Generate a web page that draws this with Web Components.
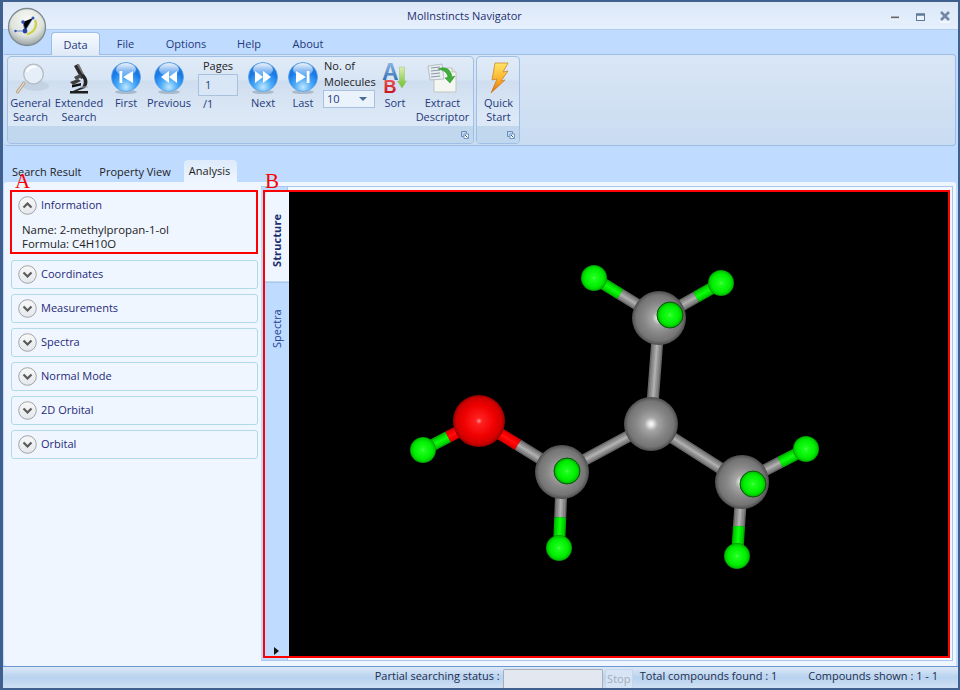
<!DOCTYPE html>
<html><head><meta charset="utf-8"><title>MolInstincts Navigator</title>
<style>
html,body{margin:0;padding:0;width:960px;height:690px;overflow:hidden;background:#bfdbff}
body{font:11px/14px "Open Sans","Noto Sans",sans-serif;color:#1f2a5e}
</style></head><body>
<app-window>
  <title-bar slot="title">MolInstincts Navigator</title-bar>
  <ribbon-tabs slot="tabs"><ribbon-tab active>Data</ribbon-tab><ribbon-tab w="51">File</ribbon-tab><ribbon-tab w="70">Options</ribbon-tab><ribbon-tab w="56">Help</ribbon-tab><ribbon-tab w="62">About</ribbon-tab></ribbon-tabs>
  <ribbon-bar slot="ribbon">
    <ribbon-group launcher style="width:467px">
      <ribbon-button w="43"><svg slot="icon" width="36" height="36" viewBox="0 0 36 36"><ellipse cx="23" cy="26" rx="13" ry="5" fill="#b4c3d4" opacity=".45"/><path d="M11 23 4.500 32" stroke="#b9a98c" stroke-width="3.200" stroke-linecap="round"/><path d="M11 23 4.500 32" stroke="#e8e0d0" stroke-width="1.200" stroke-linecap="round"/><circle cx="20.500" cy="14" r="9.800" fill="#e6eff8" stroke="#b4bac2" stroke-width="1.300"/><path d="M14 12a7 7 0 0 1 9-5" stroke="#fff" stroke-width="2" fill="none"/></svg>General<br>Search</ribbon-button>
      <ribbon-button w="54"><svg slot="icon" width="36" height="36" viewBox="0 0 36 36"><path d="M9 31h18v2.500H9z" fill="#1c1c1c"/><path d="M13 6l4-2 7 13-4 2z" fill="#2b2b2b"/><path d="M16 5l2-1 6 12-1 1z" fill="#777"/><path d="M22 14c5 3 6 10 2 14l-8 3h-4l9-4c3-4 2-8-1-11z" fill="#262626"/><path d="M9 22l8-3 3 2-8 4z" fill="#3c3c3c"/><path d="M11 25l9-2v2.500l-9 2z" fill="#111"/><path d="M13 17l6-3 2 3-6 3z" fill="#4a4a4a"/><path d="M19 27h8" stroke="#aab" stroke-width="1"/></svg>Extended<br>Search</ribbon-button>
      <ribbon-button w="40"><nav-button slot="icon" kind="first"></nav-button>First</ribbon-button>
      <ribbon-button w="46"><nav-button slot="icon" kind="prev"></nav-button>Previous</ribbon-button>
      <page-box></page-box>
      <ribbon-button w="50"><nav-button slot="icon" kind="next"></nav-button>Next</ribbon-button>
      <ribbon-button w="30"><nav-button slot="icon" kind="last"></nav-button>Last</ribbon-button>
      <molecule-count></molecule-count>
      <ribbon-button w="40"><svg slot="icon" width="36" height="36" viewBox="0 0 36 36"><defs><linearGradient id="ga" x1="0" y1="0" x2="0" y2="1"><stop offset="0" stop-color="#9cc4ec"/><stop offset="1" stop-color="#1d5ea8"/></linearGradient><linearGradient id="gb" x1="0" y1="0" x2="0" y2="1"><stop offset="0" stop-color="#f26060"/><stop offset="1" stop-color="#c00010"/></linearGradient><linearGradient id="gg" x1="0" y1="0" x2="0" y2="1"><stop offset="0" stop-color="#dcedb0"/><stop offset="1" stop-color="#6cc02c"/></linearGradient></defs><path d="M22.500 7h5v14h2l-4.500 7-4.500-7h2z" fill="url(#gg)" stroke="#9cc070" stroke-width=".5"/><text x="5" y="20" font-family="Liberation Sans" font-weight="700" font-size="23" fill="url(#ga)">A</text><text x="6.500" y="33" font-family="Liberation Sans" font-weight="700" font-size="18" fill="url(#gb)">B</text></svg>Sort</ribbon-button>
      <ribbon-button w="55"><svg slot="icon" width="36" height="36" viewBox="0 0 36 36"><path d="M9 8h18l4 4v20H9z" fill="#f4f6f2" stroke="#bfc6c0"/><path d="M27 8v4h4" fill="#dfe3de" stroke="#bfc6c0"/><path d="M3 6l14-2 2 15-14 1z" fill="#e8edf0" stroke="#aab4bc" stroke-width=".8"/><path d="M6 8l9-1M6 11l9-1M6 14l9-1M6 17l9-1" stroke="#8a98a8"/><path d="M13 9c7-3 13 0 14 8l3-1-5 7-5-5 3-1c-1-5-5-7-10-8z" fill="#3fae3a" stroke="#2a8c2a" stroke-width=".5"/></svg>Extract<br>Descriptor</ribbon-button>
    </ribbon-group>
    <ribbon-group launcher style="width:44px">
      <ribbon-button w="41"><svg slot="icon" width="36" height="36" viewBox="0 0 36 36"><defs><linearGradient id="gl" x1="0" y1="0" x2="0" y2="1"><stop offset="0" stop-color="#ffe566"/><stop offset=".55" stop-color="#fbb32a"/><stop offset="1" stop-color="#e2660c"/></linearGradient></defs><path d="M14 3h13l-5 9 5-1-7 10 4-1-14 13 6-14-5 1z" fill="url(#gl)" stroke="#c8791e" stroke-width=".7"/></svg>Quick<br>Start</ribbon-button>
    </ribbon-group>
  </ribbon-bar>
  <doc-tabs slot="doctabs"><doc-tab>Search Result</doc-tab><doc-tab>Property View</doc-tab><doc-tab active>Analysis</doc-tab></doc-tabs>
  <side-panel slot="side">
    <accordion-item marked open title-text="Information">Name: 2-methylpropan-1-ol<br>Formula: C4H10O</accordion-item>
    <accordion-item title-text="Coordinates"></accordion-item>
    <accordion-item title-text="Measurements"></accordion-item>
    <accordion-item title-text="Spectra"></accordion-item>
    <accordion-item title-text="Normal Mode"></accordion-item>
    <accordion-item title-text="2D Orbital"></accordion-item>
    <accordion-item title-text="Orbital"></accordion-item>
  </side-panel>
  <viewer-pane slot="viewer"><molecule-view></molecule-view></viewer-pane>
  <status-bar slot="status"></status-bar>
</app-window>
<script>
function def(name, css, html, init){
  customElements.define(name, class extends HTMLElement{
    constructor(){super();const s=this.attachShadow({mode:'open'});
      const h=typeof html==='function'?html(this):html;
      s.innerHTML='<style>'+css+'</style>'+h;}
    connectedCallback(){ if(init) init(this); }
  });
}
def('app-window',`
 :host{display:grid;box-sizing:border-box;width:960px;height:690px;border:2px solid #3f5f8f;border-bottom-width:2px;border-left-width:3px;
  grid-template-columns:1fr;grid-template-rows:28px 24px 93px 35px 484px 22px;background:#bfdbff;overflow:hidden}
 .panel{display:flex;margin:0 2px 0 1px;background:#eff6ff;border-radius:3px 3px 0 3px;min-height:0}
`,`<slot name="title"></slot><slot name="tabs"></slot><slot name="ribbon"></slot><slot name="doctabs"></slot>
 <div class="panel"><slot name="side"></slot><slot name="viewer"></slot></div><slot name="status"></slot>`);

def('title-bar',`
 :host{display:flex;align-items:center;position:relative;background:linear-gradient(#dbe7f5,#dfeafa 30%,#e6f0fc);border-bottom:1px solid #aecbf0;box-sizing:border-box;padding-left:404px;color:#1f2f6f;font-size:11px}
 .logo{position:absolute;left:4px;top:5px;z-index:3}
 .name{padding-top:1px}
 .ctl{position:absolute;top:0;left:0;pointer-events:none}
`,`<div class="name"><slot></slot></div>
 <svg class="ctl" width="955" height="28" viewBox="0 0 955 28"><path d="M888 15.500h8" stroke="#6a6a6a" stroke-width="2"/><path d="M888 17h8" stroke="#fff" stroke-width="1"/><rect x="913.500" y="12.500" width="8" height="6" fill="#eaf2fc" stroke="#5f7898" stroke-width="1"/><path d="M913 12.500h9" stroke="#5f7898" stroke-width="2.500"/><path d="M938 10l8 8M946 10l-8 8" stroke="#7488a4" stroke-width="2.600"/><path d="M937 20h10" stroke="#fff"/></svg>
 <svg class="logo" width="40" height="40" viewBox="0 0 40 40"><defs><radialGradient id="l" cx=".5" cy=".3" r=".8"><stop offset="0" stop-color="#f8f9f6"/><stop offset=".55" stop-color="#dfe3dc"/><stop offset="1" stop-color="#7d8a8f"/></radialGradient></defs><circle cx="20" cy="20" r="18.500" fill="url(#l)" stroke="#7e8a90" stroke-width="1.300"/><path d="M28 13a10 10 0 0 1-8 14" stroke="#cdd24a" stroke-width="2.400" fill="none"/><path d="M16 15l2 9 8-13M8 24h10" stroke="#4a6fc4" stroke-width=".8"/><circle cx="16" cy="15" r="1.800" fill="#2b50b5"/><circle cx="18" cy="24" r="2.400" fill="#23429e"/><circle cx="26" cy="11" r="1.500" fill="#2b52b8"/><circle cx="8.500" cy="24" r="1.200" fill="#2b52b8"/></svg>`);

def('ribbon-tabs',`:host{display:flex;padding-left:48px;background:#bfdbff;box-sizing:border-box;padding-top:2px;position:relative;z-index:2}`,`<slot></slot>`);
def('ribbon-tab',`
 :host{display:flex;align-items:center;justify-content:center;height:22px;width:51px;box-sizing:border-box;color:#24397c;font-size:11px;padding-top:2px}
 :host([active]){width:49px;height:23px;background:linear-gradient(#f6faff,#dfeaf7);border:1px solid #9dbce6;border-bottom:0;border-radius:4px 4px 0 0;}
`,`<slot></slot>`,e=>{const w=e.getAttribute('w');if(w)e.style.width=w+'px'});

def('ribbon-bar',`
 :host{display:flex;gap:2px;box-sizing:border-box;height:92px;margin:0 2px 1px 1px;padding:1px 0 0 3px;background:linear-gradient(#d9e6f6,#d2e1f3 45%,#c9dcf2);border:1px solid #9dbce6;border-left:0;border-radius:0 4px 4px 3px}
`,`<slot></slot>`);
def('ribbon-group',`
 :host{display:flex;flex-direction:column;box-sizing:border-box;height:88px;border:1px solid #9fbfe6;border-radius:4px;overflow:hidden;background:linear-gradient(#e0ebf7,#d8e5f4 26%,#cfdeef 28%,#dce8f6 70%)}
 .b{display:flex;height:69px;padding-left:1px;box-sizing:border-box}
 .f{flex:1;background:#c1d7ee;display:flex;justify-content:flex-end;align-items:center;padding-right:4px}
`,`<div class="b"><slot></slot></div><div class="f"><svg width="8" height="8" viewBox="0 0 8 8"><path d="M.5.5h5v2M.5.500v5h2" fill="none" stroke="#6c8cb8"/><path d="M3 3h4.500v4.500H3z" fill="#fff" stroke="#4f7fb8" stroke-width=".8"/><path d="M4 4l2.500 2.500" stroke="#33588c"/></svg></div>`);
def('ribbon-button',`
 :host{display:flex;flex-direction:column;align-items:center;flex:none;color:#24397c;font-size:11px;line-height:14px;text-align:center;white-space:nowrap}
 .i{height:36px;margin-top:3px;display:flex;align-items:center;justify-content:center;flex:none;width:36px}
`,`<div class="i"><slot name="icon"></slot></div><div><slot></slot></div>`,e=>{e.style.width=e.getAttribute('w')+'px'});
def('nav-button',`:host{display:block;width:32px;height:34px}svg{display:block}`,e=>{
 const g={first:'<path d="M9.500 10h2.800v12H9.500zM23 10v12l-10-6z" fill="#fff"/>',prev:'<path d="M16 10v12L8 16zM24 10v12l-8-6z" fill="#fff"/>',next:'<path d="M8 10v12l8-6zM16 10v12l8-6z" fill="#fff"/>',last:'<path d="M9 10v12l10-6zM19.700 10h2.800v12h-2.800z" fill="#fff"/>'}[e.getAttribute('kind')];
 return `<svg width="32" height="34" viewBox="0 0 32 34"><defs><radialGradient id="o" cx=".5" cy=".85" r=".75"><stop offset="0" stop-color="#bfe6ff"/><stop offset=".4" stop-color="#4aaaf8"/><stop offset=".8" stop-color="#1678e8"/><stop offset="1" stop-color="#2a7fdc"/></radialGradient><linearGradient id="h" x1="0" y1="0" x2="0" y2="1"><stop offset="0" stop-color="#fff" stop-opacity=".9"/><stop offset="1" stop-color="#fff" stop-opacity=".2"/></linearGradient></defs><ellipse cx="16" cy="31" rx="11" ry="2" fill="#7f93aa" opacity=".5"/><circle cx="16" cy="16" r="14.500" fill="url(#o)" stroke="#5c9fe4" stroke-width=".7"/><ellipse cx="16" cy="8.500" rx="10" ry="6.500" fill="url(#h)"/>${g}</svg>`;});
def('page-box',`
 :host{display:block;flex:none;width:40px;margin:0 0 0 6px;color:#222;font-size:11px;line-height:14px}
 .t{text-align:center;height:14px;margin-top:2px}
 .v{box-sizing:border-box;height:22px;margin-top:1px;border:1px solid #a9c0de;background:#d8e6f6;color:#24497c;padding:3px 0 0 6px}
 .s{padding:1px 0 0 5px;color:#24397c}
`,`<div class="t">Pages</div><div class="v">1</div><div class="s">/1</div>`);
def('molecule-count',`
 :host{display:block;flex:none;width:52px;margin-left:5px;color:#222;font-size:11px;line-height:16px;white-space:nowrap}
 .t{margin-top:1px;padding-left:1px}
 .c{box-sizing:border-box;height:18px;border:1px solid #a9c0de;background:#eaf2fb;display:flex;align-items:center;justify-content:space-between;padding:0 7px 0 3px;color:#24397c;margin-top:0}
 .c i{border:4px solid transparent;border-top:4px solid #4a6a9a;border-bottom:0}
`,`<div class="t">No. of<br>Molecules</div><div class="c">10<i></i></div>`);
def('doc-tabs',`:host{display:flex;align-items:flex-end;padding-left:5px;gap:0}`,`<slot></slot>`);
def('doc-tab',`
 :host{display:flex;align-items:center;height:22px;padding:2px 5px 0 4px;margin-right:9px;color:#222;font-size:11px;box-sizing:border-box}
 :host([active]){background:linear-gradient(#dceafa,#eff6ff);border-radius:4px 4px 0 0;padding:0 7px 0 5px;margin-left:-1px}
`,`<slot></slot>`);
def('side-panel',`
 :host{display:flex;flex-direction:column;position:relative;flex:none;box-sizing:border-box;width:257px;padding:8px 3px 0 7px;gap:5px}
 .a{position:absolute;left:11px;top:-11px;color:#f00;font:21px/21px "Liberation Serif",serif;background:transparent}
`,`<slot></slot><div class="a">A</div>`);
def('accordion-item',`
 :host{display:block;box-sizing:border-box;height:29px;border:1px solid #b0dbe6;border-radius:3px;background:#eff6ff;color:#222;font-size:11.400px;line-height:14px}
 :host([marked]){height:64px;border:2px solid #f00;border-radius:0;margin:0 0 1px -1px}
 .h{display:flex;align-items:center;gap:4px;height:27px;padding-left:6px;color:#1f2a78;font-size:11px}
 :host([marked]) .h{height:26px}
 .h span{padding-bottom:1px}
 .c{padding:5px 0 0 10px}
`,e=>{const open=e.hasAttribute('open');return `<div class="h"><svg width="19" height="19" viewBox="0 0 19 19"><defs><linearGradient id="k" x1="0" y1="0" x2="0" y2="1"><stop offset="0" stop-color="#f8f8f8"/><stop offset="1" stop-color="#e4e8ec"/></linearGradient></defs><circle cx="9.500" cy="9.500" r="8.800" fill="url(#k)" stroke="#a3a3a3"/><path d="${open?'M5.500 11.500l4-4 4 4':'M5.500 7.500l4 4 4-4'}" fill="none" stroke="#5a5a5a" stroke-width="2.200"/></svg><span>${e.getAttribute('title-text')}</span></div>${open?'<div class="c"><slot></slot></div>':''}`;});
def('viewer-pane',`
 :host{display:block;position:relative;flex:1;min-width:0;padding:4px 0 5px 0;box-sizing:border-box}
 .f{box-sizing:border-box;height:475px;width:692px;background:linear-gradient(90deg,#bfdbff 26px,#a9c6ec 26px,#a9c6ec 27px,#f4f9ff 27px);border-right:1px solid #a9c6ec;border-top:1px solid #a9c6ec;border-bottom:1px solid #a9c6ec;padding:3px 0 0 2px;position:relative}
 .m{box-sizing:border-box;display:flex;width:687px;height:468px;border:2px solid #f00;background:#000;position:relative}
 .tabs{width:24px;flex:none;background:#bfdbff;display:flex;flex-direction:column;font-size:11px}
 .s,.p{writing-mode:vertical-rl;transform:rotate(180deg);display:flex;align-items:center;justify-content:center;box-sizing:border-box}
 .s{height:90px;width:24px;background:#eff6ff;font-weight:700;font-size:11px;letter-spacing:.1px;color:#1d2f70;border-top:1px solid #c5d9ef;border-radius:0 0 3px 0;padding-bottom:7px}
 .p{height:92px;width:24px;color:#1f3f94;border-bottom:1px solid #a9c6ec}
 .tri{margin:auto 0 1px 9px;width:0;height:0;border:4px solid transparent;border-left:5px solid #111;border-right:0}
 .l{position:absolute;left:4px;top:-11px;color:#f00;font:21px/21px "Liberation Serif",serif}
 .v{flex:1;min-width:0}
`,`<div class="f"><div class="m"><div class="tabs"><div class="s">Structure</div><div class="p">Spectra</div><div class="tri"></div></div><div class="v"><slot></slot></div></div></div><div class="l">B</div>`);
def('molecule-view',`:host{display:block;width:659px;height:464px}svg{display:block}`,()=>{
 const C1=[659,318],C0=[651,424],C2=[562,472],C3=[742,482],O=[479,421];
 const H={a:[594,278],b:[721,283],c:[423,450],d:[559,548],e:[737,556],f:[806,449]};
 const st={grey:['#666','#858585','#9a9a9a','#b0b0b0'],green:['#00b000','#00d800','#00f000','#10f810'],red:['#d00000','#f00000','#ff0000','#ff1010']};
 const seg=(p,q,c)=>st[c].map((s,i)=>`<line x1="${p[0]}" y1="${p[1]}" x2="${q[0]}" y2="${q[1]}" stroke="${s}" stroke-width="${[12,9,5,2][i]}"/>`).join('');
 const lerp=(p,q,t)=>[p[0]+(q[0]-p[0])*t,p[1]+(q[1]-p[1])*t];
 const two=(p,q,t,a,b)=>{const m=lerp(p,q,t);return seg(p,m,a)+seg(m,q,b)};
 let s='';
 s+=seg(C0,C1,'grey')+seg(C0,C2,'grey')+seg(C0,C3,'grey');
 s+=two(O,C2,.47,'red','grey')+two(H.c,O,.45,'green','red');
 s+=two(C1,H.a,.6,'grey','green')+two(C1,H.b,.6,'grey','green');
 s+=two(C2,H.d,.6,'grey','green')+two(C3,H.e,.6,'grey','green')+two(C3,H.f,.6,'grey','green');
 const at=(p,r,f,x='')=>`<circle cx="${p[0]}" cy="${p[1]}" r="${r}" fill="url(#${f})" ${x}/>`;
 Object.values(H).forEach(p=>s+=at(p,13,'gh'));
 s+=at(O,26,'ro');
 s+=at(C1,27,'gc')+at(C0,27,'gc')+at(C2,27,'gc')+at(C3,27,'gc');
 const fr='stroke="#0a5a0a" stroke-width="1"';
 s+=at([670,315],13,'gh',fr)+at([567,471],13,'gh',fr)+at([753,484],13,'gh',fr);
 return `<svg width="659" height="464" viewBox="289 192 659 464"><defs>
 <radialGradient id="gc"><stop offset="0" stop-color="#fff"/><stop offset=".1" stop-color="#e0e0e0"/><stop offset=".25" stop-color="#a5a5a5"/><stop offset=".55" stop-color="#888"/><stop offset=".85" stop-color="#747474"/><stop offset="1" stop-color="#4c4c4c"/></radialGradient>
 <radialGradient id="gh"><stop offset="0" stop-color="#60ff60"/><stop offset=".14" stop-color="#1cff1c"/><stop offset=".7" stop-color="#00ee00"/><stop offset=".9" stop-color="#00c800"/><stop offset="1" stop-color="#008a00"/></radialGradient>
 <radialGradient id="ro"><stop offset="0" stop-color="#ff9090"/><stop offset=".12" stop-color="#ff2020"/><stop offset=".6" stop-color="#f00000"/><stop offset=".88" stop-color="#d00000"/><stop offset="1" stop-color="#900000"/></radialGradient>
 </defs><rect x="289" y="192" width="659" height="464" fill="#000"/>${s}</svg>`;});
def('status-bar',`
 :host{display:flex;align-items:center;justify-content:flex-end;box-sizing:border-box;height:22px;background:linear-gradient(#dce8f7,#b8d2ef 50%,#cfe0f4);border-top:1px solid #6b97d0;color:#1d2d4e;font-size:11px;white-space:nowrap;padding-right:20px;margin-left:-1px}
 .t{padding-bottom:3px}
 .i{box-sizing:border-box;width:100px;height:19px;margin:2px 2px 0 3px;background:#e3e7f0;border:1px solid #a8aeb6;border-bottom:0;border-radius:2px 2px 0 0}
 .b{box-sizing:border-box;width:28px;height:19px;margin:2px 7px 0 0;background:#d6e4f5;border:1px solid #c6d6ea;border-bottom:0;color:#a4adb8;display:flex;align-items:center;justify-content:center;border-radius:2px}
 .g{margin-left:31px}
`,`<span class="t">Partial searching status :</span><span class="i"></span><span class="b">Stop</span><span class="t">Total compounds found : 1</span><span class="t g">Compounds shown : 1 - 1</span>`);
</script>
</body></html>
